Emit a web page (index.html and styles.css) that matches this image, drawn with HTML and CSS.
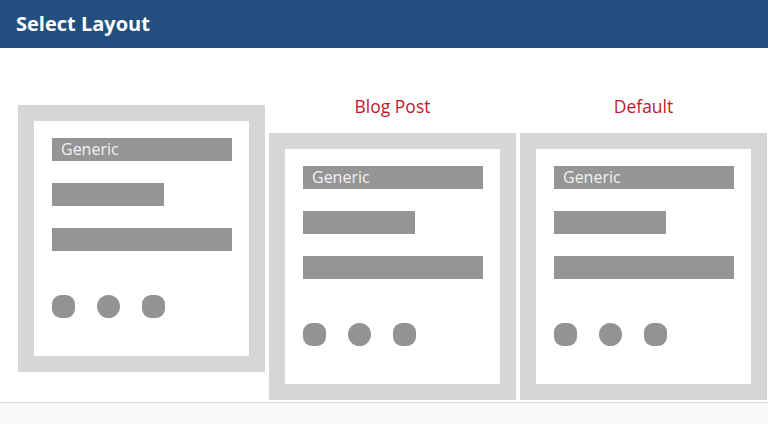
FILE: index.html
```html
<!DOCTYPE html>
<html>
<head>
<meta charset="utf-8">
<title>Select Layout</title>
<link rel="stylesheet" href="styles.css">
</head>
<body>
<header class="topbar">
  <h1 class="title">Select Layout</h1>
</header>
<main class="layouts">
  <div class="col col-selected">
    <div class="card">
      <div class="sheet">
        <div class="bar bar-label">Generic</div>
        <div class="bar bar-short"></div>
        <div class="bar"></div>
        <div class="dots"><span class="dot"></span><span class="dot dot-round"></span><span class="dot"></span></div>
      </div>
    </div>
  </div>
  <div class="col">
    <div class="label">Blog Post</div>
    <div class="card">
      <div class="sheet">
        <div class="bar bar-label">Generic</div>
        <div class="bar bar-short"></div>
        <div class="bar"></div>
        <div class="dots"><span class="dot"></span><span class="dot dot-round"></span><span class="dot"></span></div>
      </div>
    </div>
  </div>
  <div class="col">
    <div class="label">Default</div>
    <div class="card">
      <div class="sheet">
        <div class="bar bar-label">Generic</div>
        <div class="bar bar-short"></div>
        <div class="bar"></div>
        <div class="dots"><span class="dot"></span><span class="dot dot-round"></span><span class="dot"></span></div>
      </div>
    </div>
  </div>
</main>
<footer class="footer"></footer>
</body>
</html>
```

FILE: styles.css
```css
html, body {
  margin: 0;
  padding: 0;
  background: #ffffff;
  font-family: "Open Sans", "Liberation Sans", sans-serif;
}

.topbar {
  height: 48px;
  background: #234f80;
  padding: 0 16px;
}

.title {
  margin: 0;
  font-size: 20px;
  font-weight: 700;
  line-height: 48px;
  color: #ffffff;
}

.layouts {
  display: flex;
  gap: 4px;
  padding: 44px 1px 0 18px;
  height: 310px;
  align-items: flex-start;
}

.col {
  flex: 1;
  display: flex;
  flex-direction: column;
  gap: 13px;
}

.col-selected {
  padding-top: 13px;
}

.label {
  font-size: 17.5px;
  line-height: 28px;
  color: #c0182a;
  text-align: center;
}

.card {
  height: 267px;
  box-sizing: border-box;
  border: 16px solid #d6d6d6;
  background: #ffffff;
}

.sheet {
  padding: 17px 0 0 18px;
  display: flex;
  flex-direction: column;
  gap: 22px;
}

.bar {
  width: 180px;
  height: 23px;
  background: #959595;
}

.bar-short {
  width: 112px;
}

.bar-label {
  box-sizing: border-box;
  padding-left: 9px;
  font-size: 16px;
  line-height: 23px;
  color: #f2f2f2;
}

.dots {
  display: flex;
  gap: 22px;
  margin-top: 22px;
}

.dot {
  width: 23px;
  height: 23px;
  border-radius: 9px;
  background: #939393;
}

.dot-round {
  border-radius: 50%;
}

.footer {
  border-top: 1px solid #dcdcdc;
  background: #fafafa;
  height: 21px;
}
```
